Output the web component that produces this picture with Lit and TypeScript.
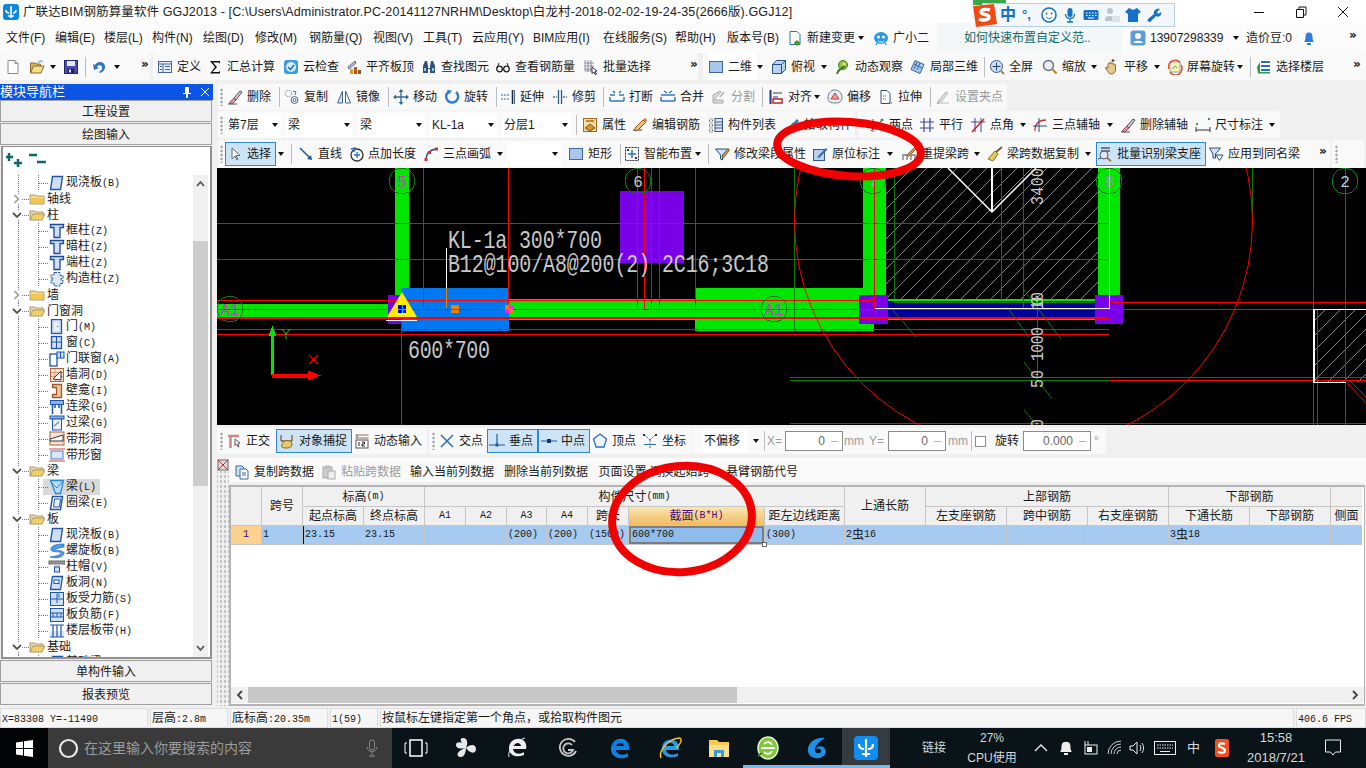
import { LitElement, html, css, svg } from "lit";
import { customElement } from "lit/decorators.js";
import { unsafeSVG } from "lit/directives/unsafe-svg.js";

const I: Record<string, string> = {
  doc: '<path d="M3 1.500h7l3 3v10H3z" fill="#fff" stroke="#8a8a8a"/><path d="M10 1.500v3h3" fill="#ddd" stroke="#8a8a8a"/>',
  open: '<path d="M1.500 14V4h5l1 1h4v2" fill="#d8b45a" stroke="#8a6a2a"/><path d="M1.500 14l3-7h10.500l-3 7z" fill="#f6dc8c" stroke="#8a6a2a"/><path d="M9 4c1-2.500 3-2.500 5-1" fill="none" stroke="#3a8a9a"/>',
  save: '<rect x="1.500" y="1.500" width="13" height="13" fill="#4a4fb0" stroke="#23266a"/><rect x="4" y="2" width="8" height="5" fill="#e8e8f4"/><rect x="4.500" y="9.500" width="7" height="5" fill="#23266a"/><rect x="6" y="10.500" width="2" height="3" fill="#ddd"/>',
  undo: '<path d="M3 6c2-4 9-4 10 1 .6 3-2 6-5 7l-1-1c2-1 3.500-3 3-5-.6-2.500-4-2.500-5 0l2 1-5 2-1-6z" fill="#2e73c6"/>',
  def: '<rect x="1.500" y="2.500" width="13" height="11" fill="#e6eefa" stroke="#43669a"/><path d="M2 5h12M6 5v8M8 7.500h5M8 10.500h5M3 7.500h2M3 10.500h2" stroke="#43669a"/>',
  sigma: '<path d="M3 2h10v3l-1-1.500H6l4 4.500-4.500 5H12l1-1.500v3H3l5-6.500z" fill="#111"/>',
  cloud: '<rect x="1" y="1" width="14" height="14" rx="3" fill="#3d9be0"/><circle cx="8" cy="8" r="5" fill="#d6ecfa"/><path d="M5 8l2.500 2.500L11 6" fill="none" stroke="#1673bd" stroke-width="1.500"/>',
  flush: '<path d="M2 8l7-6 1 2-7 6z" fill="#b8c8d8" stroke="#667"/><rect x="4" y="10" width="3" height="5" fill="#d4a030"/><rect x="8" y="8" width="3" height="7" fill="#c24f2a"/><rect x="12" y="11" width="3" height="4" fill="#8a5a20"/>',
  binoc: '<path d="M2 14V7l2-5h2l1 5v2h2V7l1-5h2l2 5v7h-5V10H7v4z" fill="#33507a"/><rect x="3" y="9" width="2" height="3" fill="#9cc"/><rect x="11" y="9" width="2" height="3" fill="#9cc"/>',
  glasses: '<circle cx="4.500" cy="10" r="2.800" fill="none" stroke="#222" stroke-width="1.300"/><circle cx="11.500" cy="10" r="2.800" fill="none" stroke="#222" stroke-width="1.300"/><path d="M7 10h2M2 9l2-5M14 9l-2-5" stroke="#222" fill="none"/>',
  batch: '<path d="M2 1v11h8M5 1v11M8 1v11M2 4h9M2 7h9M2 10h9" stroke="#8a8a9a" fill="none"/><path d="M9 8l5 4-2 .5 1.500 2.500-1.500.5-1-2.500-2 1.500z" fill="#fff" stroke="#335"/>',
  sq: '<rect x="1.500" y="2.500" width="13" height="11" fill="#a8c6ee" stroke="#3b66a8"/>',
  cube: '<path d="M1.500 5.500l4-4h9v9l-4 4h-9z" fill="#b8d4ee" stroke="#24507a"/><path d="M1.500 5.500h9v9M10.500 5.500l4-4" fill="none" stroke="#24507a"/>',
  orbit: '<circle cx="8" cy="6" r="4.500" fill="#8cc63f" stroke="#3d7a1f"/><path d="M2 15c1-4 4-6 8-8" stroke="#3d7a1f" stroke-width="2" fill="none"/><circle cx="9" cy="5" r="1.500" fill="#f6e05e"/>',
  local3d: '<path d="M5 1.500l9 4-4 9-9-4z" fill="#a9c8ea" stroke="#35689c"/><path d="M4 5l8 4M7 3l-3 7M10 4l-3 7" stroke="#35689c" fill="none"/>',
  full: '<circle cx="7.500" cy="7.500" r="6" fill="#cfe0f4" stroke="#35588a"/><path d="M7.500 3.500v8M3.500 7.500h8" stroke="#24407a"/><path d="M12 12l3 3" stroke="#c07a20" stroke-width="2"/>',
  zoom: '<circle cx="6.500" cy="6.500" r="5" fill="#e8eef4" stroke="#667788" stroke-width="1.500"/><path d="M10.500 10.500l4 4" stroke="#b88a20" stroke-width="2.200"/>',
  hand: '<path d="M4 9V5c0-1 1.500-1 1.500 0V4c0-1 2-1 2 0v.500c0-1 2-1 2 0V6c0-1 2-1 2 0v5c0 2-2 4-4 4s-3-1-4-3l-2-3c0-1 1-1 2.500 0z" fill="#e8c88a" stroke="#8a6a3a"/><path d="M9 0v3M7.500 1.500h3" stroke="#335"/>',
  rot: '<rect x="3" y="3" width="10" height="10" fill="#f4f0b0" stroke="#8ab"/><path d="M5 10l3-3 2 2" stroke="#4a8" fill="none"/><path d="M2 10A6.500 6.500 0 0 1 13 3.500M14 6a6.500 6.500 0 0 1-11 7" fill="none" stroke="#e0502a" stroke-width="1.500"/>',
  floors: '<path d="M5 3h9M5 7h9M5 11h9" stroke="#2c6fb0" stroke-width="2"/><path d="M1 8l3-5v10h10v1.500H2z" fill="#2f9a4a"/>',
  erase: '<path d="M2 14l5-5 2 2-4 4z" fill="#e88ab0" stroke="#a04a70"/><path d="M7 9l6-7 2 1-6 8z" fill="#c8c8d8" stroke="#555"/><path d="M1 15h9" stroke="#555"/>',
  copy: '<circle cx="4.500" cy="4.500" r="3.200" fill="none" stroke="#7a8a9a" stroke-dasharray="1.500 1"/><circle cx="10.500" cy="11" r="3.500" fill="none" stroke="#4a6a8a"/><circle cx="10.500" cy="11" r="1.500" fill="none" stroke="#4a6a8a"/><path d="M9 2l3 1-1 3" fill="none" stroke="#2f6fb5"/>',
  mirror: '<path d="M6.500 2v12H1.500z" fill="#d8e4f2" stroke="#47658a"/><path d="M9.500 2v12h5z" fill="#fff" stroke="#47658a"/>',
  move: '<path d="M8 1v14M1 8h14" stroke="#35689c" stroke-width="1.300"/><path d="M8 0l2.500 3h-5zM8 16l2.500-3h-5zM0 8l3-2.500v5zM16 8l-3-2.500v5z" fill="#35689c"/>',
  rotate: '<path d="M5 2.500A6 6 0 1 0 12 3" fill="none" stroke="#2f7fd0" stroke-width="2.500"/><path d="M3 1l5 .500-3 4z" fill="#2f7fd0"/>',
  extend: '<path d="M1 6h9M1 10h9" stroke="#3a6a9a" stroke-dasharray="2 1"/><path d="M12.500 1v14" stroke="#223" stroke-width="1.500"/><path d="M14.500 1v14" stroke="#3a6a9a"/>',
  trim: '<path d="M6.500 1v14M9.500 1v14" stroke="#2a5a8a" stroke-width="1.300"/><path d="M1 8h4M11 8h4" stroke="#223" stroke-dasharray="2 1"/>',
  brk: '<path d="M1 6h5M10 6h5M1 12h14M1 12v-4M15 12v-4" stroke="#3a77b5" stroke-width="1.500"/><path d="M4 2l2 2M12 2l-2 2" stroke="#3a77b5" stroke-width="1.500"/>',
  merge: '<path d="M1 6h14M1 12h14M1 12v-4M15 12v-4" stroke="#3a77b5" stroke-width="1.500"/><path d="M4 2l3 2M12 2l-3 2" stroke="#3a77b5" stroke-width="1.500"/>',
  split: '<path d="M2 14V6l7-4 1 1-7 8h9v3z" fill="#ddd" stroke="#aaa"/><path d="M9 8l4-5" stroke="#bbb" stroke-width="2"/>',
  align: '<path d="M2.500 1v14" stroke="#1a3a8a" stroke-width="2"/><path d="M5 4h9M5 8h5" stroke="#1a3a8a"/><rect x="5" y="10" width="9" height="4" fill="none" stroke="#b02a2a" stroke-width="1.500"/>',
  offset: '<path d="M8 1c5 0 7 4 7 8s-3 5-7 5-7-1-7-5 2-8 7-8z" fill="#e8eef6" stroke="#6a7a8a"/><path d="M8 4l4 6H4z" fill="#f0a0a0" stroke="#c03a3a"/>',
  stretch: '<path d="M3 1.500h6l3 3v10H3z" fill="#fff" stroke="#33507a"/><path d="M5 7h4M5 10h3M11 14h4" stroke="#33507a" stroke-dasharray="1 1"/>',
  grip: '<path d="M2 14h12" stroke="#bbb"/><path d="M3 12l8-9 2 1-7 9z" fill="#ddd" stroke="#bbb"/><circle cx="3" cy="14" r="1.200" fill="#aaa"/>',
  attr: '<rect x="1.500" y="1.500" width="13" height="13" fill="#f6dfa0" stroke="#a06a20"/><path d="M4 4h8" stroke="#a06a20" stroke-width="1.500"/><path d="M3 11l5-4 5 4-5 3z" fill="#d49a30" stroke="#7a5010"/>',
  edit: '<path d="M1 13h9" stroke="#333"/><path d="M3 11l8-8 3 2-8 8-3 1z" fill="#f0c070" stroke="#8a5a20"/><path d="M11 3l2-2 2 2-1 2z" fill="#e06a4a"/>',
  list: '<path d="M1.500 2h3v3h-3zM1.500 7h3v3h-3zM1.500 12h3v3h-3z" fill="none" stroke="#555" stroke-dasharray="1 1"/><rect x="7" y="1.500" width="7.500" height="13" fill="#dfe8f4" stroke="#35588a"/><path d="M7 5h7M7 8h7M7 11h7" stroke="#35588a"/>',
  pick: '<path d="M2 14l7-8 2 2-8 7z" fill="#cde" stroke="#357"/><path d="M9 6l4-4 2 2-4 4z" fill="#3a7ac0"/>',
  two: '<path d="M4 2v13M1 9h14" stroke="#b02a2a"/><path d="M2 14l11-11" stroke="#24507a"/><circle cx="13" cy="3" r="1.500" fill="#2a9a4a"/>',
  para: '<path d="M1 5h14M1 11h14M5 1v14M11 1v14" stroke="#3a4a9a" stroke-width="1.200"/>',
  angle: '<path d="M5 1v14M11 1v14M1 5h14" stroke="#3a4a9a"/><path d="M2 15L14 2" stroke="#d02020" stroke-width="1.500"/>',
  arc3: '<path d="M3 14C3 7 7 3 14 3" fill="none" stroke="#d03030" stroke-width="1.300"/><path d="M1 9h14M7 1v14" stroke="#24507a"/>',
  dim: '<path d="M1 13h14M1 10v5M15 10v5" stroke="#333"/><rect x="1" y="6" width="2" height="2" fill="#3a9a4a"/><rect x="13" y="1" width="2" height="2" fill="#3a9a4a"/>',
  cursor: '<path d="M5 2v11l3-3 2 4 1-.5-2-4h4z" fill="#fff" stroke="#667"/>',
  line: '<path d="M2 2l11 11" stroke="#1f5a9a" stroke-width="1.500"/><path d="M14 14l-5-1 4-4z" fill="#1f5a9a"/>',
  len: '<circle cx="9" cy="9" r="6" fill="none" stroke="#333" stroke-width="1.300"/><path d="M9 6v6M6 9h6" stroke="#2f6fb5" stroke-width="1.300"/><path d="M3 3l4-1-1 4" fill="none" stroke="#2f6fb5" stroke-width="1.300"/>',
  arc: '<path d="M3 14C3 8 6 4 13 3" fill="none" stroke="#24507a" stroke-width="1.500"/><rect x="1.500" y="12" width="3" height="3" fill="#d03030"/><rect x="5" y="5" width="3" height="3" fill="#d03030"/><rect x="12" y="1.500" width="3" height="3" fill="#d03030"/>',
  smart: '<rect x="1.500" y="1.500" width="13" height="13" fill="#f4f4f4" stroke="#223" stroke-dasharray="2 1"/><path d="M8 4v8M4 8h8" stroke="#2f6fb5" stroke-width="1.500"/><rect x="3" y="3" width="2" height="2" fill="#333"/><rect x="11" y="11" width="2" height="2" fill="#333"/>',
  modbeam: '<path d="M1.500 3h13l-6 6v5l-2-1V9z" fill="#cfe0f4" stroke="#24507a"/><path d="M8 11l6-8 1.500 1-6 8z" fill="#e8b040" stroke="#8a5a20"/>',
  origin: '<rect x="1.500" y="3.500" width="11" height="11" fill="#b8d0ee" stroke="#35588a"/><path d="M6 10l8-8 1.500 1.500-8 8-2 .5z" fill="#3a6aa8"/>',
  lift: '<path d="M2 14V9h4v5M10 14V9h4v5" fill="none" stroke="#8a8aa0" stroke-width="1.500"/><path d="M2 9h12" stroke="#8a8aa0"/><path d="M6 9l8-8 1.500 1.500-8 8z" fill="#e0a050" stroke="#8a5a20"/>',
  broom: '<path d="M15 1L8 7" stroke="#7a5a20" stroke-width="1.800"/><path d="M8 5l3 3-5 7-5-2z" fill="#e8c860" stroke="#8a7020"/>',
  bulk: '<path d="M4 2h9M4 5h9" stroke="#556" stroke-width="1.300"/><circle cx="7" cy="9" r="4" fill="#dfe8f4" stroke="#556"/><path d="M10 12l4 3" stroke="#a07a20" stroke-width="2"/><path d="M1 13l3-1" stroke="#357"/>',
  same: '<path d="M1.500 2h11l-5 6v4H5V8z" fill="#d6e4f6" stroke="#24507a"/><path d="M8 9h7l-3.500 5.500z" fill="#fff" stroke="#24507a"/>',
  ortho: '<path d="M2 3h11M4.500 3v12" stroke="#c88a8a" stroke-width="2.500"/><path d="M9 6l5 4-2 .5 1 3-1 .5-1.500-3-1.500 1.500z" fill="#fff" stroke="#556"/>',
  snap: '<path d="M2 2v6M13 2v6M2 8h11" stroke="#8a5a30" stroke-width="1.300"/><path d="M3 14c-1-3 1-5 3-6 3-1 7 0 7 3s-2 4-5 4-4 0-5-1z" fill="#e8c870" stroke="#8a6a2a"/>',
  dyn: '<path d="M1.500 2h13M1.500 5h13M3 2v3" stroke="#8a6a6a" stroke-width="1.200"/><rect x="2" y="7" width="12" height="8" fill="#fff" stroke="#555"/><path d="M5 9v4M8 9h2.500v2H8v2h3" stroke="#222" fill="none"/>',
  cross: '<path d="M2 2l12 12M14 2L2 14" stroke="#2f6fb5" stroke-width="1.500"/>',
  perp: '<path d="M0 12h16M8 1v11" stroke="#1f5a9a" stroke-width="1.200"/><rect x="6.500" y="10.500" width="3" height="3" fill="#1f5a9a"/>',
  mid: '<path d="M0 8h16" stroke="#1f5a9a" stroke-width="1.200"/><rect x="6" y="6" width="4" height="4" fill="#123a7a"/>',
  vert: '<path d="M8 1l6.500 5-2.500 8H4L1.500 6z" fill="#eef4fb" stroke="#2f6fb5" stroke-width="1.300"/>',
  coord: '<path d="M8 15V7M8 7L3 2M8 7l5-5" stroke="#2f6fb5" stroke-dasharray="2 1"/><rect x="1" y="1" width="2" height="2" fill="#333"/><rect x="13" y="1" width="2" height="2" fill="#333"/><rect x="2" y="11" width="12" height="1" fill="#2f6fb5"/>',
  cpy: '<path d="M2 2h6l2 2v8H2z" fill="#cfe0f4" stroke="#35689c"/><path d="M6 5h6l2 2v8H6z" fill="#fff" stroke="#35689c"/><path d="M8 9h4M8 11h4" stroke="#35689c"/>',
  paste: '<rect x="2" y="3" width="9" height="11" fill="#ccc" stroke="#aaa"/><rect x="4" y="1.500" width="5" height="3" fill="#bbb"/><rect x="7" y="7" width="7" height="8" fill="#eee" stroke="#aaa"/>',
  newc: '<path d="M3 1.500h7l3 3v10H3z" fill="#fff" stroke="#2f6fb5"/><path d="M10 10l3.500 3-3.500 3-3.500-3z" fill="#4a9a2a"/>',
  robot: '<ellipse cx="8" cy="8" rx="7" ry="6" fill="#2a9ae8"/><circle cx="5.500" cy="7" r="1.500" fill="#fff"/><circle cx="10.500" cy="7" r="1.500" fill="#fff"/><path d="M5 11c2 1.500 4 1.500 6 0" stroke="#fff" fill="none"/><path d="M4 13l-1 2M12 13l1 2" stroke="#2a9ae8" stroke-width="1.500"/>',
  user: '<rect x="0.500" y="0.500" width="15" height="15" rx="3" fill="#5a9ed8"/><circle cx="8" cy="6" r="3" fill="#fff"/><path d="M3 13c1-3 9-3 10 0z" fill="#fff"/>',
  bell: '<path d="M3 12c2-2 1-5 2-8 1-2 5-2 6 0 1 3 0 6 2 8z" fill="#2a80e0"/><rect x="6" y="13" width="4" height="2" fill="#2a80e0"/>',
};
const T: Record<string, string> = {
  slab: '<path d="M3.500 1.500h10l-2 13h-10z" fill="#cfe0f6" stroke="#1c55b0" stroke-width="1.400"/>',
  col: '<path d="M1.500 1.500h13v3h-3.500v10H5v-10H1.500z" fill="#cfe0f6" stroke="#1c4a9a" stroke-width="1.300"/>',
  gcol: '<path d="M5 1.500h6v3h3v3h-2v2h2v3h-3v2.500H5V12H2V9h2V7H2V4h3z" fill="#dde8f8" stroke="#2c5a9c" stroke-dasharray="3 1"/>',
  door: '<rect x="2.500" y="0.500" width="10" height="14" fill="#cfe0f6" stroke="#1c55b0" stroke-width="1.300"/><rect x="5" y="3" width="5" height="9" fill="#e8f0fc"/><rect x="8" y="7" width="1" height="1" fill="#1c55b0"/>',
  win: '<rect x="2.500" y="1.500" width="10" height="12" fill="#cfe0f6" stroke="#1c55b0" stroke-width="1.300"/><path d="M7.500 2v11M3 7h9" stroke="#1c55b0"/>',
  dw: '<rect x="1" y="3" width="7" height="12" fill="#fff" stroke="#1c55b0" stroke-width="1.300"/><rect x="8" y="1" width="7" height="6" fill="#cfe0f6" stroke="#1c55b0"/><path d="M11.500 1v6" stroke="#1c55b0"/>',
  hole: '<rect x="1.500" y="1.500" width="13" height="13" fill="#fbe6d6" stroke="#b0603a"/><path d="M2 5.500h12M2 9.500h12M6 2v12" stroke="#d89a7a"/><path d="M4 12L12 4v9z" fill="#fff" stroke="#333"/>',
  niche: '<path d="M3.500 1.500h9v13h-9v-3h4v-7h-4z" fill="#f2c8a0" stroke="#a0582a" stroke-width="1.300"/>',
  link: '<rect x="1.500" y="1.500" width="13" height="4" fill="#8ab4ea" stroke="#1c55b0"/><path d="M3.500 6v9M12.500 6v9M6 6v3M10 6v3" stroke="#1c55b0" stroke-width="1.500"/>',
  lintel: '<rect x="1" y="1" width="14" height="3" fill="#8ab4ea" stroke="#1c55b0"/><rect x="3.500" y="4" width="9" height="11" fill="#e6effa" stroke="#1c55b0"/><path d="M5 11l5-4" stroke="#555"/>',
  bhole: '<rect x="1" y="1" width="14" height="13" fill="#fbe6d6" stroke="#b0603a"/><path d="M1 8l13-4v6H1z" fill="#fff" stroke="#333"/>',
  bwin: '<path d="M0 2h16M0 14h16" stroke="#f0a090" stroke-width="2"/><rect x="2" y="4" width="12" height="8" fill="#d8e6fa" stroke="#4a7ac0"/>',
  beam: '<path d="M1.500 1.500h13l-3 13h-5z" fill="#bcdcf8" stroke="#1f8ae0" stroke-width="1.300"/><path d="M3 4l5 5 5-6" fill="none" stroke="#1f8ae0"/>',
  ring: '<path d="M3.500 1.500h10l-2 13h-10z" fill="none" stroke="#1c55b0" stroke-width="1.500"/><path d="M5.500 4h6l-1 8h-6z" fill="#e6effa" stroke="#1c55b0"/>',
  spiral: '<path d="M15 1C6 1 1 3 2 7c1 3 10 1 10 3s-5 3-11 4c7 2 14 0 14-4 0-3-8-2-9-3s4-2 9-3z" fill="#4aa0e8" stroke="#1c55b0" stroke-width=".6"/>',
  cap: '<rect x="0" y="2" width="16" height="3" fill="#999" stroke="#666"/><path d="M4 5h8l-2 3H6z" fill="#ccc"/><rect x="5.500" y="8" width="5" height="5" fill="#cfe0f6" stroke="#1c55b0"/>',
  shole: '<path d="M3.500 1.500h10l-2 13h-10z" fill="#cfe0f6" stroke="#1c55b0" stroke-width="1.300"/><rect x="5" y="5" width="5" height="3.500" fill="#fff" stroke="#1c55b0"/>',
  sbar: '<rect x="1.500" y="1.500" width="13" height="13" fill="#cfe0f6" stroke="#1c55b0"/><path d="M2 8h12M8 3v9M8 3c3 0 3 3 1 3" stroke="#1c55b0" fill="none"/>',
  nbar: '<rect x="1.500" y="1.500" width="13" height="13" fill="#cfe0f6" stroke="#1c55b0"/><path d="M2 6h12M2 10h12M8 6v4M4 6v4M12 6v4" stroke="#1c55b0"/>',
  band: '<path d="M1 2h14M1 14h14M4 2v12M8 2v12M12 2v12" stroke="#1c55b0" stroke-width="1.200"/><rect x="1" y="8" width="14" height="6" fill="#1c55b0" opacity=".15"/>',
};

const TREE: [string, string, string?][] = [
  ["l", "现浇板(B)", "slab"], ["c", "轴线"], ["o", "柱"], ["l", "框柱(Z)", "col"], ["l", "暗柱(Z)", "col"], ["l", "端柱(Z)", "col"], ["l", "构造柱(Z)", "gcol"],
  ["c", "墙"], ["o", "门窗洞"], ["l", "门(M)", "door"], ["l", "窗(C)", "win"], ["l", "门联窗(A)", "dw"], ["l", "墙洞(D)", "hole"], ["l", "壁龛(I)", "niche"], ["l", "连梁(G)", "link"], ["l", "过梁(G)", "lintel"], ["l", "带形洞", "bhole"], ["l", "带形窗", "bwin"],
  ["o", "梁"], ["s", "梁(L)", "beam"], ["l", "圈梁(E)", "ring"], ["o", "板"], ["l", "现浇板(B)", "slab"], ["l", "螺旋板(B)", "spiral"], ["l", "柱帽(V)", "cap"], ["l", "板洞(N)", "shole"], ["l", "板受力筋(S)", "sbar"], ["l", "板负筋(F)", "nbar"], ["l", "楼层板带(H)", "band"],
  ["o", "基础"], ["l", "基础梁(F)", "slab"],
];

type It = [number, string, string?, string?];
type Seg = { from: number; to: number; items: It[] };

const TB1: Seg[] = [
  { from: 0, to: 150, items: [[13, "doc"], [37, "open"], [53, ">"], [71, "save"], [85, "|"], [100, "undo"], [117, ">"], [141, "»"]] },
  { from: 153, to: 698, items: [[165, "def", "定义"], [215, "sigma", "汇总计算"], [291, "cloud", "云检查"], [354, "flush", "平齐板顶"], [429, "binoc", "查找图元"], [503, "glasses", "查看钢筋量"], [591, "batch", "批量选择"], [690, "»"]] },
  { from: 703, to: 1366, items: [[716, "sq", "二维", "wh"], [760, ">"], [779, "cube", "俯视"], [824, ">"], [843, "orbit", "动态观察"], [918, "local3d", "局部三维"], [984, "|"], [997, "full", "全屏"], [1050, "zoom", "缩放"], [1094, ">"], [1112, "hand", "平移"], [1157, ">"], [1175, "rot", "屏幕旋转"], [1240, ">"], [1250, "|"], [1264, "floors", "选择楼层"], [1353, "»"]] },
];
const TB2: Seg[] = [
  { from: 218, to: 1007, items: [[220, ":"], [235, "erase", "删除"], [279, "|"], [292, "copy", "复制"], [344, "mirror", "镜像"], [388, "|"], [401, "move", "移动"], [452, "rotate", "旋转"], [496, "|"], [508, "extend", "延伸"], [560, "trim", "修剪"], [603, "|"], [617, "brk", "打断"], [668, "merge", "合并"], [719, "split", "分割", "dim"], [762, "|"], [776, "align", "对齐"], [817, ">"], [835, "offset", "偏移"], [886, "stretch", "拉伸"], [930, "|"], [943, "grip", "设置夹点", "dim"]] },
];
const TB3: Seg[] = [
  { from: 218, to: 855, items: [[220, ":"], [226, "combo", "第7层"], [286, "combo", "梁"], [358, "combo", "梁"], [430, "combo", "KL-1a"], [502, "combo", "分层1"], [576, "|"], [590, "attr", "属性"], [640, "edit", "编辑钢筋"], [716, "list", "构件列表"], [792, "pick", "拾取构件"]] },
  { from: 858, to: 1280, items: [[877, "two", "两点"], [927, "para", "平行"], [978, "angle", "点角"], [1023, ">"], [1040, "arc3", "三点辅轴"], [1110, ">"], [1128, "erase", "删除辅轴"], [1203, "dim", "尺寸标注"], [1272, ">"]] },
];
const TB4: Seg[] = [
  { from: 218, to: 1330, items: [[220, ":"], [235, "cursor", "选择", "on"], [276, "sp"], [281, ">"], [291, "|"], [306, "line", "直线"], [356, "len", "点加长度"], [431, "arc", "三点画弧"], [500, ">"], [507, "combo", ""], [566, "sp"], [576, "sq", "矩形"], [620, "|"], [632, "smart", "智能布置"], [698, ">"], [708, "|"], [722, "modbeam", "修改梁段属性"], [820, "origin", "原位标注"], [890, ">"], [909, "lift", "重提梁跨"], [977, ">"], [995, "broom", "梁跨数据复制"], [1088, ">"], [1105, "bulk", "批量识别梁支座", "on"], [1206, "sp"], [1216, "same", "应用到同名梁"], [1319, "»"]] },
  { from: 1332, to: 1364, items: [[1335, ":"]] },
];

const COLS = [30, 40, 60, 60, 40, 40, 39, 40, 40, 135, 79, 80, 80, 80, 80, 80, 80, 31];
const HEAD2 = ["起点标高", "终点标高", "A1", "A2", "A3", "A4", "跨长"];
const HEAD3 = ["左支座钢筋", "跨中钢筋", "右支座钢筋", "下通长筋", "下部钢筋", "侧面"];

function mono(t: string) {
  return t.split(/([\x00-\x7f]+)/).filter(Boolean).map((p) => (/^[\x00-\x7f]/.test(p) ? html`<span class="m">${p}</span>` : p));
}
const ico = (k: string) => html`<svg class="ic" viewBox="0 0 16 16">${unsafeSVG(I[k] || "")}</svg>`;

@customElement("app-root")
export class AppRoot extends LitElement {
  static styles = css`
    :host { display: block; width: 1366px; height: 768px; overflow: hidden; position: relative; background: #f0f0f0; font: 12px/16px "Liberation Sans", "Noto Sans CJK SC", sans-serif; color: #1a1a1a; }
    .m { font: 10px/16px "Liberation Mono", monospace; }
    svg { display: block; flex: none; }
    .title { height: 23px; background: #fff; display: flex; align-items: center; position: relative; }
    .logo { width: 16px; height: 16px; margin: 0 4px 0 3px; }
    .ttl { flex: 1; white-space: nowrap; font-size: 12.500px; letter-spacing: .12px; color: #222; }
    .win { display: flex; width: 126px; }
    .win svg { width: 46px; height: 16px; margin-left: -4px; }
    .menu { height: 30px; background: #fbfbfb; display: flex; align-items: center; white-space: nowrap; }
    .menu .mi { flex: none; }
    .tip { width: 186px; height: 30px; background: #f4f7f7; color: #0f6a6c; line-height: 30px; padding-left: 27px; box-sizing: border-box; font-size: 12px; flex: none; }
    .bar { display: flex; align-items: center; white-space: nowrap; flex: none; }
    .t1 { height: 31px; padding-bottom: 4px; box-sizing: border-box; }
    .t2 { height: 27px; padding-bottom: 1px; box-sizing: border-box; }
    .t3 { height: 27px; box-sizing: border-box; }
    .t4 { height: 30px; padding-top: 2px; box-sizing: border-box; }
    .seg { display: flex; align-items: center; height: 100%; background: #f9f9f9; border-radius: 3px; flex: none; overflow: hidden; }
    .it { display: flex; align-items: center; height: 100%; flex: none; gap: 4px; box-sizing: border-box; overflow: hidden; }
    .ic { width: 16px; height: 16px; }
    .dim { color: #9a9a9a; }
    .wh { background: #fff; }
    .on { background: #cde4f7; border: 1px solid #2a88d8; height: 24px; padding-left: 0; overflow: visible; }
    .ar { width: 0; height: 0; border: 3px solid transparent; border-top: 4px solid #111; border-bottom: 0; }
    .sp { width: 1px; height: 20px; background: #bdbdbd; flex: none; }
    .ch { font: bold 12px/12px "DejaVu Sans", sans-serif; margin-top: -6px; color: #111; }
    .hd { width: 3px; height: 18px; background-image: radial-gradient(#a8a8a8 1px, transparent 1.200px); background-size: 3px 4px; }
    .combo { background: #fff; height: 24px; justify-content: space-between; padding: 0 3px 0 2px; margin-right: 5px; }
    .main { display: flex; height: 622px; }
    .left { width: 213px; flex: none; display: flex; flex-direction: column; box-sizing: border-box; }
    .lhead { height: 16px; background: #0a55e6; color: #fff; display: flex; align-items: center; justify-content: space-between; padding-right: 3px; line-height: 16px; font-size: 13px; flex: none; }
    .lhead div { display: flex; gap: 8px; }
    .lbtn { height: 22px; box-sizing: border-box; margin: 0 1px 1px 0; border: 1px solid #a0a0a0; background: #f0f0f0; text-align: center; line-height: 22px; flex: none; }
    .treebox { flex: 1; min-height: 0; border: 1px solid #8f8f8f; border-width: 1px 2px 2px 2px; margin: 0 1px 1px 1px; background: #fff; display: flex; flex-direction: column; }
    .ttools { height: 28px; display: flex; flex: none; padding: 4px 0 0 3px; box-sizing: border-box; gap: 4px; }
    .ttools svg { width: 19px; height: 18px; }
    .tb { flex: 1; min-height: 0; display: flex; }
    .rows { flex: 1; overflow: hidden; }
    .row { display: flex; height: 16px; align-items: center; white-space: nowrap; }
    .row svg { height: 16px; }
    .fd svg { width: 42px; margin-right: 2px; }
    .lf svg { width: 62px; margin-right: 1px; }
    .lab { font-size: 12px; padding-right: 1px; }
    .sel { background: linear-gradient(#d9d9d9, #d9d9d9) 40px 0 / 57px 100% no-repeat; }
    .vs { width: 15px; margin-right: 2px; background: #f0f0f0; flex: none; display: flex; flex-direction: column; align-items: center; }
    .vs svg { width: 9px; height: 18px; }
    .thumb { width: 15px; height: 245px; background: #cdcdcd; margin-top: 48px; }
    .vs .end { margin-top: auto; }
    .split { width: 4px; flex: none; }
    .right { width: 1149px; flex: none; display: flex; flex-direction: column; }
    .cad { width: 1149px; height: 257px; background: #000; flex: none; }
    .cad text { font-family: "Liberation Mono", monospace; }
    .sn { height: 30px; padding-top: 2px; box-sizing: border-box; margin-bottom: 3px; }
    .sn .seg { height: 26px; }
    .off { width: 414px; padding-left: 10px; box-sizing: border-box; margin-left: 1px; }
    .nocombo { width: 46px; margin: 0; }
    .offar { width: 16px; padding-left: 5px; }
    .mr2 { margin-right: 2px; }
    .mr3 { margin-right: 3px; }
    .lb18 { width: 18px; }
    .lb19 { width: 19px; }
    .mm1 { width: 26px; padding-left: 1px; box-sizing: border-box; }
    .mm2 { width: 25px; padding-left: 2px; box-sizing: border-box; }
    .chk { margin-right: 9px; }
    .lb28 { width: 28px; }
    .deg { padding-left: 3px; }
    .fld { height: 20px; border: 1px solid #8a8a8a; background: #fff; box-sizing: border-box; display: flex; align-items: center; justify-content: flex-end; color: #666; position: relative; padding-right: 17px; flex: none; width: 58px; }
    .fld.big { width: 68px; }
    .fld::after { content: ""; position: absolute; right: 4px; top: 3px; width: 7px; height: 12px; background: linear-gradient(#444 0 0) center/7px 1px no-repeat; opacity: .4; }
    .gridwrap { flex: 1; min-height: 0; display: flex; }
    .strip { width: 12px; flex: none; position: relative; background-image: radial-gradient(#c4c4c4 1px, transparent 1.200px); background-size: 4px 5px; background-position: 2px 16px; background-repeat: repeat; }
    .strip svg { width: 12px; height: 12px; background: #f0f0f0; margin-top: 1px; }
    .gridcol { flex: 1; min-width: 0; display: flex; flex-direction: column; }
    .gtools { height: 24px; background: #fafafa; margin: 0 0 3px 0; padding: 3px 0 0 5px; box-sizing: border-box; flex: none; }
    .gpane { flex: 1; min-height: 0; background: #fff; border: 2px solid #b4b4b4; border-right-width: 1px; margin-right: 1px; display: flex; flex-direction: column; }
    .grid { display: grid; grid-template-rows: 19px 18px 18px; gap: 1px; background: #c6c6c6; width: max-content; border-bottom: 1px solid #c6c6c6; }
    .c { background: #f0f0f0; display: flex; align-items: center; justify-content: center; white-space: nowrap; overflow: hidden; }
    .d { background: #a6caf0; justify-content: flex-start; padding-left: 1px; }
    .rh { background: #fcd28e; color: #4b0a7a; justify-content: center; padding: 0; }
    .gold { background: linear-gradient(#fbe6b0, #f0bb62); color: #4b0a7a; }
    .cur { background: #8ebcec; box-shadow: inset 0 0 0 2px #7c7c7c; position: relative; overflow: visible; padding-left: 3px; }
    .cur::after { content: ""; position: absolute; right: -3px; bottom: -3px; width: 5px; height: 5px; background: #fff; border: 1px solid #666; box-sizing: border-box; }
    .lb { box-shadow: inset 1px 0 0 #111; padding-left: 2px; }
    .gspace { flex: 1; }
    .hs { height: 16px; background: #f0f0f0; display: flex; align-items: center; margin-bottom: 1px; flex: none; }
    .hs svg { width: 17px; height: 16px; }
    .hs .th { width: 489px; height: 16px; background: #c8c8c8; flex: none; }
    .hs .end { margin-left: auto; }
    .status { height: 20px; margin-top: 2px; display: flex; gap: 2px; white-space: nowrap; }
    .st { background: #f6f6f6; border: 1px solid #dedede; box-sizing: border-box; height: 20px; line-height: 18px; padding-left: 1px; flex: none; overflow: hidden; }
    .st .m { line-height: 18px; }
    .task { height: 40px; background: #0a1418; display: flex; align-items: center; color: #ddd; position: relative; }
    .start { width: 48px; height: 40px; background: #020406; display: flex; align-items: center; justify-content: center; flex: none; }
    .search { width: 344px; height: 40px; background: #3a3a3a; display: flex; align-items: center; padding-left: 10px; box-sizing: border-box; color: #9c9c9c; font-size: 14px; flex: none; gap: 5px; }
    .search span { flex: 1; }
    .search svg:last-child { margin-right: 14px; }
    .apps { display: flex; flex: none; }
    .app { height: 40px; display: flex; align-items: center; justify-content: center; box-sizing: border-box; flex: none; }
    .app.u { border-bottom: 3px solid #76b9ed; padding-top: 3px; }
    .app.act { background: #343c40; }
    .tray { display: flex; align-items: center; flex: 1; color: #d8d8d8; }
    .lnk { width: 34px; margin-left: 32px; }
    .cpu { width: 72px; text-align: center; line-height: 20px; font-size: 12px; }
    .tup { margin: 0 11px 0 6px; }
    .tbell { margin-right: 9px; }
    .tpow { margin-right: 9px; }
    .twifi { margin-right: 6px; }
    .tspk { margin-right: 9px; }
    .tkb { margin-right: 11px; }
    .zh { width: 26px; font-size: 13px; }
    .ts { margin-left: 1px; }
    .clock { width: 88px; text-align: center; line-height: 20px; font-size: 13px; margin-left: 2px; }
    .tnote { margin-left: 5px; }
    .over { position: absolute; left: 0; top: 0; pointer-events: none; }
    .ime { position: absolute; left: 970px; top: 0; height: 27px; width: 205px; pointer-events: none; }
    .imebar { position: absolute; left: 12px; top: 3px; height: 24px; right: 0; background: #f2f7fc; border: 1px solid #b7cde0; box-sizing: border-box; display: flex; align-items: center; padding-left: 17px; gap: 5px; color: #1670c8; font-weight: bold; font-size: 15px; }
    .imebar svg { width: 16px; height: 16px; }
    .imezh { font-size: 16px; line-height: 16px; }
    .imep { width: 12px; font-size: 13px; line-height: 12px; margin: 0 2px 0 1px; }
    .imelogo { position: absolute; left: 0; top: 3px; width: 28px; height: 25px; }
    .imetop { position: absolute; left: 3px; top: 0; width: 33px; height: 5px; background: #3aa648; }
  `;

  private renderBar(cls: string, segs: Seg[], base: number) {
    let prev = base;
    const out = segs.map((s) => {
      const left = s.from - prev;
      prev = s.to;
      const pos = (it: It) => {
        const k = it[1];
        if (k === "»" || k === ":" || k === "|" || k === "sp" || k === "combo") return it[0];
        if (k === ">") return it[0] - 3;
        if (it[3] === "on") return it[0] === 235 ? 225 : 1096;
        return it[0] - 8;
      };
      const first = s.items.length ? pos(s.items[0]) - s.from : 0;
      return html`<div class="seg" style="width:${s.to - s.from}px;margin-left:${left}px;padding-left:${first}px;box-sizing:border-box">
        ${s.items.map((it, i) => {
          const next = i + 1 < s.items.length ? pos(s.items[i + 1]) : s.to;
          const x = pos(it);
          const w = next - x;
          const k = it[1];
          const st = `width:${w}px`;
          if (k === ">") return html`<div class="it" style=${st}><div class="ar"></div></div>`;
          if (k === "|") return html`<div class="it" style=${st}><div class="sp"></div></div>`;
          if (k === "sp") return html`<div class="it" style=${st}></div>`;
          if (k === ":") return html`<div class="it" style=${st}><div class="hd"></div></div>`;
          if (k === "»") return html`<div class="it" style=${st}><div class="ch">»</div></div>`;
          if (k === "combo") {
            const cw = Math.max(w - 5, 0);
            return html`<div class="it combo" style="width:${cw}px"><span>${it[2]}</span><div class="ar"></div></div>`;
          }
          const on = it[3] === "on";
          const pl = on ? it[0] - 8 - x - 1 : 0;
          return html`<div class="it ${it[3] || ""}" style="${st};${on ? `padding-left:${pl}px` : ""}">${ico(k)}${it[2] ? html`<span>${it[2]}</span>` : ""}</div>`;
        })}
      </div>`;
    });
    return html`<div class="bar ${cls}">${out}</div>`;
  }

  private row(r: [string, string, string?]) {
    const [k, label, icon] = r;
    const dot = 'stroke="#777" stroke-dasharray="1 1" fill="none"';
    if (k === "c" || k === "o") {
      const chev = k === "c" ? '<path d="M11.500 4l4 4-4 4" fill="none" stroke="#a8a8a8" stroke-width="1.800"/>' : '<path d="M10 6l4 4 4-4" fill="none" stroke="#555" stroke-width="1.800"/>';
      const folder = k === "c"
        ? '<path d="M27 13V4h5l1 1h8v8z" fill="#f8dd88" stroke="#a89a70"/><path d="M28 7h12v5H28z" fill="#f2c850"/>'
        : '<path d="M27 13V4h5l1 1h7v2" fill="#e8d8a8" stroke="#a89a70"/><path d="M27 13l3-6h12l-3 6z" fill="#f4cf62" stroke="#a89a70"/>';
      return html`<div class="row fd"><svg viewBox="0 0 42 16">${unsafeSVG(`<path d="M15.500 0V3M15.500 13V16M19 8.500h7" ${dot}/>${chev}${folder}`)}</svg><span class="lab">${mono(label)}</span></div>`;
    }
    return html`<div class="row lf ${k === "s" ? "sel" : ""}"><svg viewBox="0 0 62 16">${unsafeSVG(`<path d="M15.500 0V16M35.500 0V16M36 8.500h10" ${dot}/><g transform="translate(46,0)">${T[icon!] || ""}</g>`)}</svg><span class="lab">${mono(label)}</span></div>`;
  }

  private cad() {
    const R = "#ff0000", G = "#00e600", g = "#0a7a0a";
    const hl = (y: number, a: number, b: number, c = R, w = 1) => svg`<path d="M${a} ${y + 0.5}H${b}" stroke=${c} stroke-width=${w}/>`;
    const vl = (x: number, a: number, b: number, c = R, w = 1) => svg`<path d="M${x + 0.5} ${a}V${b}" stroke=${c} stroke-width=${w}/>`;
    const hex = (cx: number, cy: number, t: string, c = "#c040c0") => {
      const r = 13;
      const p = Array.from({ length: 12 }, (_, i) => `${(cx + r * Math.cos((i * Math.PI) / 6)).toFixed(1)},${(cy + r * Math.sin((i * Math.PI) / 6)).toFixed(1)}`).join(" ");
      return svg`<polygon points=${p} fill="none" stroke=${g}/><text x=${cx} y=${cy + 6} text-anchor="middle" font-size="16" fill=${c}>${t}</text>`;
    };
    const lbl = (x: number, y: number, t: string, len: number) => svg`<text transform="translate(${x},${y}) scale(1,1.25)" font-size="20" textLength=${len}>${t}</text>`;
    const rot = (x: number, y: number, t: string, len: number) => svg`<text transform="translate(${x},${y}) rotate(-90) scale(1,1.2)" font-size="15" textLength=${len}>${t}</text>`;
    return html`<svg class="cad" viewBox="217 168 1149 257" shape-rendering="crispEdges">
      <defs><pattern id="h" patternUnits="userSpaceOnUse" width="15" height="15"><path d="M-1 16L16 -1" stroke="#bcbcbc" stroke-width=".7" shape-rendering="auto"/></pattern></defs>
      <rect x="620" y="191" width="64" height="72" fill="#7a00e8"/>
      <rect x="395" y="168" width="14" height="134" fill=${G}/>
      <rect x="217" y="304" width="172" height="14" fill=${G}/>
      <rect x="509" y="299" width="186" height="21" fill=${G}/>
      <rect x="695" y="288" width="179" height="43" fill=${G}/>
      <rect x="863" y="168" width="23" height="132" fill=${G}/>
      <rect x="1098" y="168" width="22" height="132" fill=${G}/>
      <rect x="886" y="168" width="212" height="131" fill="url(#h)"/>
      <rect x="401" y="288" width="108" height="43" fill="#0078f0"/>
      <rect x="888" y="299" width="207" height="21" fill=${G}/>
      <rect x="888" y="301" width="207" height="16" fill="#000098"/>
      <rect x="388" y="295" width="14" height="29" fill="#7a00e8"/>
      <rect x="859" y="295" width="29" height="29" fill="#7a00e8"/>
      <rect x="1095" y="295" width="28" height="29" fill="#7a00e8"/>
      <rect x="1314" y="309" width="52" height="73" fill="url(#h)"/>
      ${vl(401, 317, 425, g)}${vl(894, 168, 299, g)}${vl(1001, 168, 300, g)}${vl(794, 168, 331, g)}${vl(1252, 168, 226, g)}${vl(1037, 298, 378, g)}${vl(1317, 382, 425, g)}${vl(1313, 168, 425, g)}
      ${hl(377, 790, 1109, g)}${hl(380, 790, 1109, g)}${hl(423, 790, 1110, g)}${hl(302, 894, 1095, g)}
      <path d="M1007 307l22 30M1024 290l37 49M893 310l23 27M1024 362l28 37M1024 410l12 14" stroke=${g} fill="none" shape-rendering="auto"/>
      <circle cx="1023.500" cy="221" r="229" fill="none" stroke=${R} shape-rendering="auto"/>
      ${[423, 508, 637, 644, 651, 659, 695, 874, 1023, 1109].map((x) => vl(x, 168, 309))}
      ${vl(1345, 168, 425)}${vl(1317, 309, 382)}
      ${hl(223, 217, 1109)}${hl(259, 217, 1109)}${hl(300, 217, 874)}${hl(302, 1109, 1366)}${hl(309, 217, 1366)}${hl(329, 217, 1109)}${hl(334, 217, 1109)}${hl(377, 1109, 1366)}${hl(380, 1109, 1366)}${hl(423, 1110, 1366)}
      <path d="M217 317.500H1109" stroke=${R} stroke-width="2"/>
      <path d="M875 308.500H1109V168" stroke="#fff" fill="none"/>
      <path d="M1314 382.500V309.500H1366M1314 382.500H1346" stroke="#fff" fill="none" stroke-width="1.500"/>
      <path d="M1347 383l19 20M1350 381l16 16" stroke=${R} fill="none" shape-rendering="auto"/>
      <path d="M948 168l44 44 44-44" stroke="#fff" fill="none" stroke-width="1.500" shape-rendering="auto"/>
      <path d="M992 168v44" stroke="#fff" stroke-width="2"/>
      <path d="M446.500 248V288" stroke="#fff" stroke-width="1.500"/><path d="M446.500 288V308" stroke="#f08000" stroke-width="1.500"/>
      <path d="M402 292l15 25h-30z" fill="#ffee00" shape-rendering="auto"/>
      <path d="M386 320h31" stroke="#fff"/>
      <rect x="398" y="305" width="8" height="8" fill="#0000e0"/><path d="M402 305v8M398 309h8" stroke="#00c0ff"/>
      <rect x="451" y="305" width="8" height="8" fill="#f08000"/><path d="M451 309h8" stroke="#0a8a8a"/>
      <rect x="505" y="305" width="4" height="4" fill="#f08000"/><rect x="509" y="305" width="4" height="4" fill="#ff20ff"/><rect x="505" y="309" width="4" height="4" fill="#ff20ff"/><rect x="509" y="309" width="4" height="4" fill="#f08000"/>
      ${hex(402, 181, "5")}${hex(638, 181, "6", "#c8c8c8")}${hex(873, 181, "7", "#9ab")}${hex(1109, 181, "8", "#9a8ab8")}${hex(1345, 181, "2", "#b8c8d8")}${hex(230, 309, "A1")}${hex(774, 309, "A1")}
      <g shape-rendering="auto" fill="#c8c8c8">
        ${lbl(448, 248, "KL-1a 300*700", 154)}
        ${lbl(448, 272, "B12@100/A8@200(2) 2C16;3C18", 321)}
        ${lbl(408, 358, "600*700", 82)}
        ${rot(1043, 205, "3400", 37)}${rot(1043, 310, "100", 18)}${rot(1043, 361, "1000", 34)}${rot(1043, 388, "50", 18)}${rot(1043, 428, "0", 9)}
      </g>
      <path d="M272.500 375V333" stroke="#00e600" stroke-width="3"/><path d="M272.500 326l4 10h-8z" fill="#00e600"/>
      <path d="M272 375.500H310" stroke="#ff0000" stroke-width="4"/><path d="M321 375.500l-13-5v10z" fill="#ff0000"/>
      <path d="M282 329l4 5 4-5M286 334v5" stroke="#00e600" fill="none" shape-rendering="auto"/>
      <path d="M309 355l9 9M318 355l-9 9" stroke="#ff0000" fill="none" shape-rendering="auto"/>
    </svg>`;
  }

  render() {
    const snap: Seg[] = [
      { from: 217, to: 427, items: [[220, ":"], [234, "ortho", "正交"], [287, "snap", "对象捕捉", "on2"], [352, "sp"], [362, "dyn", "动态输入"]] },
      { from: 429, to: 691, items: [[432, ":"], [447, "cross", "交点"], [497, "perp", "垂点", "on3"], [549, "mid", "中点", "on3"], [590, "sp"], [600, "vert", "顶点"], [650, "coord", "坐标"]] },
    ];
    const bx: Record<string, [number, number]> = { 287: [276, 351], 497: [487, 538], 549: [538, 589] };
    return html`
      <div class="title">
        <svg class="logo" viewBox="0 0 16 16"><rect width="16" height="16" rx="3" fill="#0d86e8"/><path d="M8 2v12M3 6c0 2 1 3 3 3M13 6c0 2-1 3-3 3M5 12h6" stroke="#fff" stroke-width="1.600" fill="none"/></svg>
        <div class="ttl">广联达BIM钢筋算量软件 GGJ2013 - [C:\\Users\\Administrator.PC-20141127NRHM\\Desktop\\白龙村-2018-02-02-19-24-35(2666版).GGJ12]</div>
        <div class="win">
          <svg viewBox="0 0 46 16"><path d="M18 8.500h10" stroke="#111"/></svg>
          <svg viewBox="0 0 46 16"><path d="M18.500 5.500h7v8h-7zM21 5V3h7v8h-2" fill="none" stroke="#111"/></svg>
          <svg viewBox="0 0 46 16"><path d="M18 3l10 10M28 3L18 13" stroke="#111" fill="none"/></svg>
        </div>
      </div>
      <div class="menu">${this.menu()}</div>
      ${this.renderBar("t1", TB1, 0)}
      <div class="main">
        <div class="left">
          <div class="lhead"><span>模块导航栏</span><div>
            <svg width="10" height="12" viewBox="0 0 10 12"><path d="M3 1h4v6h2v1H6v4H4V8H1V7h2z" fill="#fff"/></svg>
            <svg width="10" height="12" viewBox="0 0 10 12"><path d="M1 2l8 8M9 2l-8 8" stroke="#fff"/></svg></div></div>
          <div class="lbtn">工程设置</div>
          <div class="lbtn">绘图输入</div>
          <div class="treebox">
            <div class="ttools">
              <svg viewBox="0 0 19 18"><path d="M3 2v8M0 6h7M12 8v8M8 12h8" stroke="#0a6a6a" stroke-width="2.500"/></svg>
              <svg viewBox="0 0 19 18"><path d="M0 4h8M8 11h9" stroke="#0a6a6a" stroke-width="2.500"/></svg>
            </div>
            <div class="tb">
              <div class="rows">${TREE.map((r) => this.row(r))}</div>
              <div class="vs">
                <svg viewBox="0 0 9 18"><path d="M1 11l3.500-4 3.500 4" fill="none" stroke="#555" stroke-width="1.800"/></svg>
                <div class="thumb"></div>
                <svg class="end" viewBox="0 0 9 18"><path d="M1 7l3.500 4 3.500-4" fill="none" stroke="#555" stroke-width="1.800"/></svg>
              </div>
            </div>
          </div>
          <div class="lbtn">单构件输入</div>
          <div class="lbtn">报表预览</div>
        </div>
        <div class="split"></div>
        <div class="right">
          ${this.renderBar("t2", TB2, 217)}
          ${this.renderBar("t3", TB3, 217)}
          ${this.renderBar("t4", TB4, 217)}
          ${this.cad()}
          <div class="bar sn">
            ${snap.map((s, si) => {
              const prevTo = si === 0 ? 217 : snap[si - 1].to;
              const xs = s.items.map((it) => (it[1] === ":" || it[1] === "sp" ? it[0] : it[3] ? bx[it[0]][0] : it[0] - 8));
              return html`<div class="seg" style="width:${s.to - s.from}px;margin-left:${s.from - prevTo}px;padding-left:${xs[0] - s.from}px;box-sizing:border-box">
                ${s.items.map((it, i) => {
                  const w = (i + 1 < xs.length ? xs[i + 1] : s.to) - xs[i];
                  if (it[1] === ":") return html`<div class="it" style="width:${w}px"><div class="hd"></div></div>`;
                  if (it[1] === "sp") return html`<div class="it" style="width:${w}px"></div>`;
                  const on = !!it[3];
                  return html`<div class="it ${on ? "on" : ""}" style="width:${w}px;${on ? `padding-left:${it[0] - 8 - xs[i] - 1}px` : ""}">${ico(it[1])}<span>${it[2]}</span></div>`;
                })}
              </div>`;
            })}
            <div class="seg off">
              <div class="it combo nocombo"><span>不偏移</span></div>
              <div class="it offar"><div class="ar"></div></div>
              <div class="sp mr2"></div>
              <span class="dim lb18">X=</span>
              <div class="fld">0</div><span class="dim mm1">mm</span>
              <span class="dim lb19">Y=</span>
              <div class="fld">0</div><span class="dim mm2">mm</span>
              <div class="sp mr3"></div>
              <svg class="chk" width="11" height="11" viewBox="0 0 11 11"><rect x=".5" y=".5" width="10" height="10" fill="#fff" stroke="#8a8a8a"/></svg>
              <span class="lb28">旋转</span>
              <div class="fld big">0.000</div><span class="dim deg">°</span>
            </div>
          </div>
          <div class="gridwrap">
            <div class="strip"><svg viewBox="0 0 12 12"><rect x="1" y="1" width="10" height="10" fill="#e8d8d8" stroke="#666"/><path d="M1 1l10 10M11 1L1 11" stroke="#a03a3a"/></svg></div>
            <div class="gridcol">
              <div class="gtools bar">
                ${([["cpy", "复制跨数据", 87], ["paste", "粘贴跨数据", 89, "dim"], ["", "输入当前列数据", 94], ["", "删除当前列数据", 94.5], ["", "页面设置", 51], ["", "调换起始跨", 76.5], ["", "悬臂钢筋代号", 100]] as any[]).map(
                  (a) => html`<div class="it ${a[3] || ""}" style="width:${a[2]}px">${a[0] ? ico(a[0]) : ""}<span>${a[1]}</span></div>`,
                )}
              </div>
              <div class="gpane">
                ${this.grid()}
                <div class="gspace"></div>
                <div class="hs">
                  <svg viewBox="0 0 17 16"><path d="M11 4L7 8l4 4" fill="none" stroke="#444" stroke-width="1.800"/></svg>
                  <div class="th"></div>
                  <svg class="end" viewBox="0 0 17 16"><path d="M6 4l4 4-4 4" fill="none" stroke="#444" stroke-width="1.800"/></svg>
                </div>
              </div>
            </div>
          </div>
        </div>
      </div>
      <div class="status">
        <div class="st" style="width:148px">${mono("X=83308 Y=-11490")}</div>
        <div class="st" style="width:78px">${mono("层高:2.8m")}</div>
        <div class="st" style="width:98px">${mono("底标高:20.35m")}</div>
        <div class="st" style="width:48px">${mono("1(59)")}</div>
        <div class="st" style="width:914px">按鼠标左键指定第一个角点，或拾取构件图元</div>
        <div class="st" style="width:70px">${mono("406.6 FPS")}</div>
      </div>
      ${this.taskbar()}
      <svg class="over" width="1366" height="768" viewBox="0 0 1366 768">
        <ellipse cx="849" cy="149" rx="72" ry="27" fill="none" stroke="#f00000" stroke-width="8" transform="rotate(4 849 149)"/>
        <ellipse cx="682" cy="519" rx="70" ry="53" fill="none" stroke="#f00000" stroke-width="8" transform="rotate(-6 682 519)"/>
      </svg>
      <div class="ime">
        <div class="imetop"></div>
        <div class="imebar">
          <span class="imezh">中</span>
          <span class="imep">°,</span>
          <svg viewBox="0 0 16 16"><circle cx="8" cy="8" r="7" fill="#fff" stroke="#1670c8" stroke-width="1.600"/><circle cx="5.500" cy="6.500" r="1" fill="#1670c8"/><circle cx="10.500" cy="6.500" r="1" fill="#1670c8"/><path d="M5 10c2 2 4 2 6 0" stroke="#1670c8" fill="none"/></svg>
          <svg viewBox="0 0 16 16"><rect x="5.500" y="1" width="5" height="9" rx="2.500" fill="#1670c8"/><path d="M3.500 7c0 6 9 6 9 0M8 12v3M5 15h6" stroke="#1670c8" fill="none" stroke-width="1.300"/></svg>
          <svg viewBox="0 0 16 16"><rect x="0.500" y="3" width="15" height="10" rx="1.500" fill="#1670c8"/><path d="M3 6h1.500M6 6h1.500M9 6h1.500M12 6h1.500M3 8.500h1.500M6 8.500h1.500M9 8.500h1.500M12 8.500h1.500M5 11h6" stroke="#fff"/></svg>
          <svg viewBox="0 0 16 16"><circle cx="6" cy="4" r="3" fill="#b8c4d0"/><path d="M1 12c0-4 10-4 10 0v2H1z" fill="#b8c4d0"/><rect x="8" y="9" width="8" height="6" fill="#dde4ea"/></svg>
          <svg viewBox="0 0 16 16"><path d="M4 1l4 2 4-2 4 4-3 2v8H3V7L0 5z" fill="#1670c8"/></svg>
          <svg viewBox="0 0 16 16"><path d="M14 2l-3 3 1 2 3-2c1 3-2 6-5 4l-6 6c-2 0-3-1-2-3l6-5C7 4 10 1 14 2z" fill="#1670c8"/></svg>
        </div>
        <svg class="imelogo" viewBox="0 0 28 25"><path d="M3 3l21-2 3 20-21 3z" fill="#f24a12"/><path d="M20 7c-3-1-9-1-9 2s8 2 8 5-6 4-10 2" fill="none" stroke="#fff" stroke-width="3.400"/></svg>
      </div>
    `;
  }

  private menu() {
    const items: [string, number][] = [["文件(F)", 6], ["编辑(E)", 55], ["楼层(L)", 104], ["构件(N)", 152], ["绘图(D)", 203], ["修改(M)", 255], ["钢筋量(Q)", 309], ["视图(V)", 373], ["工具(T)", 423], ["云应用(Y)", 472], ["BIM应用(I)", 533], ["在线服务(S)", 603], ["帮助(H)", 675], ["版本号(B)", 727], ["", 787]];
    return html`${items.slice(0, -1).map(([t, x], i) => html`<div class="mi" style="width:${items[i + 1][1] - x}px;${i === 0 ? `margin-left:${x}px` : ""}">${t}</div>`)}
      ${[["newc", "新建变更", 71], [">", "", 15], ["robot", "广小二", 64]].map((a) => this.menuIt(a))}
      <div class="tip">如何快速布置自定义范..</div>
      ${[["", "", 7], ["user", "13907298339", 103], [">", "", 13], ["", "造价豆:0", 55], ["bell", "", 48]].map((a) => this.menuIt(a))}
      <div class="ch">»</div>`;
  }

  private menuIt(a: any[]) {
    return html`<div class="it" style="width:${a[2]}px">${a[0] === ">" ? html`<div class="ar"></div>` : a[0] ? ico(a[0]) : ""}${a[1] ? html`<span>${a[1]}</span>` : ""}</div>`;
  }

  private grid() {
    const tpl = COLS.map((w) => w + "px").join(" ");
    const c = (col: number, span: number, row: number, rspan: number, t: string, cls = "c") =>
      html`<div class=${cls} style="grid-column:${col}/span ${span};grid-row:${row}/span ${rspan}">${mono(t)}</div>`;
    const data: [string, string?][] = [["1", "c rh"], ["1"], ["23.15", "c d lb"], ["23.15"], [""], [""], ["(200)"], ["(200)"], ["(1500)"], ["600*700", "c d cur"], ["(300)"], ["2虫16"], [""], [""], [""], ["3虫18"], [""], [""]];
    return html`<div class="grid" style="grid-template-columns:${tpl}">
      ${c(1, 1, 1, 2, "")}${c(2, 1, 1, 2, "跨号")}${c(3, 2, 1, 1, "标高(m)")}${c(5, 7, 1, 1, "构件尺寸(mm)")}${c(12, 1, 1, 2, "上通长筋")}${c(13, 3, 1, 1, "上部钢筋")}${c(16, 2, 1, 1, "下部钢筋")}${c(18, 1, 1, 1, "")}
      ${HEAD2.map((t, i) => c(3 + i, 1, 2, 1, t))}
      ${c(10, 1, 2, 1, "截面(B*H)", "c gold")}
      ${c(11, 1, 2, 1, "距左边线距离")}
      ${HEAD3.map((t, i) => c(13 + i, 1, 2, 1, t))}
      ${data.map((d, i) => c(i + 1, 1, 3, 1, d[0], d[1] || "c d"))}
    </div>`;
  }

  private taskbar() {
    const apps: [string, number, string][] = [
      ["", 48, `<rect x="6" y="4" width="12" height="16" fill="none" stroke="#fff" stroke-width="1.500"/><path d="M3 7H1v10h2M21 7h2v10h-2" stroke="#fff" fill="none"/>`],
      ["", 51, `<path d="M12 12C8 8 4 2 9 2s5 6 3 10c4-4 10-4 10 1s-6 5-10-1c0 4-2 10-6 9s-4-6 6-9c-4 1-10 1-10-3s6-3 10 0z" fill="#e8e8e8"/>`],
      ["", 51, `<path d="M21 13H8c.5 5 7 6 11 3v3c-7 3-15 1-15-7 0-7 7-10 11-9 5 1 7 5 6 10zM8 10h8c0-4-7-4-8 0z" fill="#eee"/><path d="M4 21C2 15 10 5 20 2" fill="none" stroke="#eee"/>`],
      ["", 52, `<path d="M19 6A8.500 8.500 0 1 0 20 15M16 9a5 5 0 1 0 1 5h-5" fill="none" stroke="#c8c8c8" stroke-width="1.800"/>`],
      ["", 51, `<path d="M21 14H8c.5 5 8 6 12 3v4c-7 3-17 1-17-8C3 5 10 2 15 3c4 1 7 5 6 11zM8 10h8c0-4-7-4-8 0z" fill="#0f7fe0"/>`],
      ["", 49, `<path d="M21 14H8c.5 5 8 6 12 3v3c-7 3-16 1-16-7C4 5 10 3 15 4c4 1 7 5 6 10zM8 10h8c0-4-7-4-8 0z" fill="#2a9ae8"/><path d="M3 22C0 14 12 2 22 2c3 2-1 8-4 10" fill="none" stroke="#f0c020" stroke-width="1.500"/>`],
      ["", 49, `<path d="M2 4h8l2 2h10v15H2z" fill="#f7c94e"/><rect x="2" y="9" width="20" height="12" fill="#fbe08c"/><rect x="7" y="14" width="10" height="7" fill="#3a9ad8"/><rect x="10" y="17" width="4" height="4" fill="#fbe08c"/>`],
      ["u", 49, `<ellipse cx="12" cy="12" rx="10" ry="11" fill="#7fc63c" stroke="#dff5c8" stroke-width="1.500"/><path d="M5 12h14M8 8c3-3 7-2 8 1M8 16c3 3 7 2 8-1" stroke="#fff" stroke-width="1.800" fill="none"/><path d="M2 20l4-3" stroke="#3a8a2a" stroke-width="2"/>`],
      ["u", 50, `<path d="M20 2C12 1 4 5 3 13c-1 7 6 10 11 9 6-1 8-6 6-9-2-4-8-3-9 0 2-1 5-1 5 2s-5 3-6 0c-1-5 4-9 10-13z" fill="#1e90e8"/>`],
      ["u act", 48, `<rect x="0" y="0" width="24" height="24" rx="4" fill="#0f8df0"/><path d="M12 3v18M5 8c0 3 2 5 5 5M19 8c0 3-2 5-5 5M8 18h8" stroke="#fff" stroke-width="2.200" fill="none"/>`],
    ];
    return html`<div class="task">
      <div class="start"><svg width="17" height="17" viewBox="0 0 17 17"><path d="M0 2.500l7-1v6.500H0zM8 1.300L17 0v8H8zM0 9h7v6.500l-7-1zM8 9h9v8l-9-1.300z" fill="#fff"/></svg></div>
      <div class="search">
        <svg width="21" height="21" viewBox="0 0 21 21"><circle cx="10.500" cy="10.500" r="8.500" fill="none" stroke="#e8e8e8" stroke-width="2.200"/></svg>
        <span>在这里输入你要搜索的内容</span>
        <svg width="12" height="18" viewBox="0 0 12 18"><rect x="3.500" y="1" width="5" height="10" rx="2.500" fill="none" stroke="#888"/><path d="M1 8c0 6 10 6 10 0M6 13v4M3 17h6" stroke="#888" fill="none"/></svg>
      </div>
      <div class="apps">
        ${apps.map(([c, w, p]) => html`<div class="app ${c}" style="width:${w}px"><svg width="24" height="24" viewBox="0 0 24 24">${unsafeSVG(p)}</svg></div>`)}
      </div>
      <div class="tray">
        <div class="lnk">链接</div>
        <div class="cpu">27%<br />CPU使用</div>
        <svg class="tup" width="14" height="14" viewBox="0 0 14 14"><path d="M1 10l6-6 6 6" fill="none" stroke="#eee" stroke-width="1.300"/></svg>
        <svg class="tbell" width="14" height="16" viewBox="0 0 14 16"><path d="M1 12c2-2 1-5 2-8 1-3 7-3 8 0 1 3 0 6 2 8zM5 13h4v2H5z" fill="#eee"/></svg>
        <svg class="tpow" width="16" height="16" viewBox="0 0 16 16"><rect x="3" y="5" width="12" height="9" fill="none" stroke="#eee"/><rect x="5" y="7" width="5" height="5" fill="#eee"/><path d="M3 1v4M6 1v4" stroke="#eee"/></svg>
        <svg class="twifi" width="16" height="16" viewBox="0 0 16 16"><path d="M1 14A13 13 0 0 1 14 1M4 14a10 10 0 0 1 10-10M7 14a7 7 0 0 1 7-7M10 14a4 4 0 0 1 4-4" fill="none" stroke="#ccc"/></svg>
        <svg class="tspk" width="16" height="16" viewBox="0 0 16 16"><path d="M1 6h3l4-4v12l-4-4H1zM11 5c1 2 1 4 0 6M13 3c2 3 2 7 0 10" fill="none" stroke="#eee"/></svg>
        <svg class="tkb" width="22" height="14" viewBox="0 0 22 14"><rect x=".5" y=".5" width="21" height="13" fill="none" stroke="#eee"/><path d="M3 4h16M3 7h16" stroke="#eee" stroke-dasharray="1.500 1"/><path d="M6 10.500h10" stroke="#eee"/></svg>
        <div class="zh">中</div>
        <svg class="ts" width="16" height="20" viewBox="0 0 16 20"><rect x="1" y="1" width="14" height="18" rx="2" fill="#f0501a"/><path d="M11 6C8 5 5 5 5 7.500s6 2 6 5S7 15 4 14" fill="none" stroke="#fff" stroke-width="2.200"/></svg>
        <div class="clock">15:58<br />2018/7/21</div>
        <svg class="tnote" width="16" height="18" viewBox="0 0 16 18"><path d="M.5 1h15v12h-5l-2.500 3-2.500-3h-5z" fill="none" stroke="#eee"/></svg>
      </div>
    </div>`;
  }
}
